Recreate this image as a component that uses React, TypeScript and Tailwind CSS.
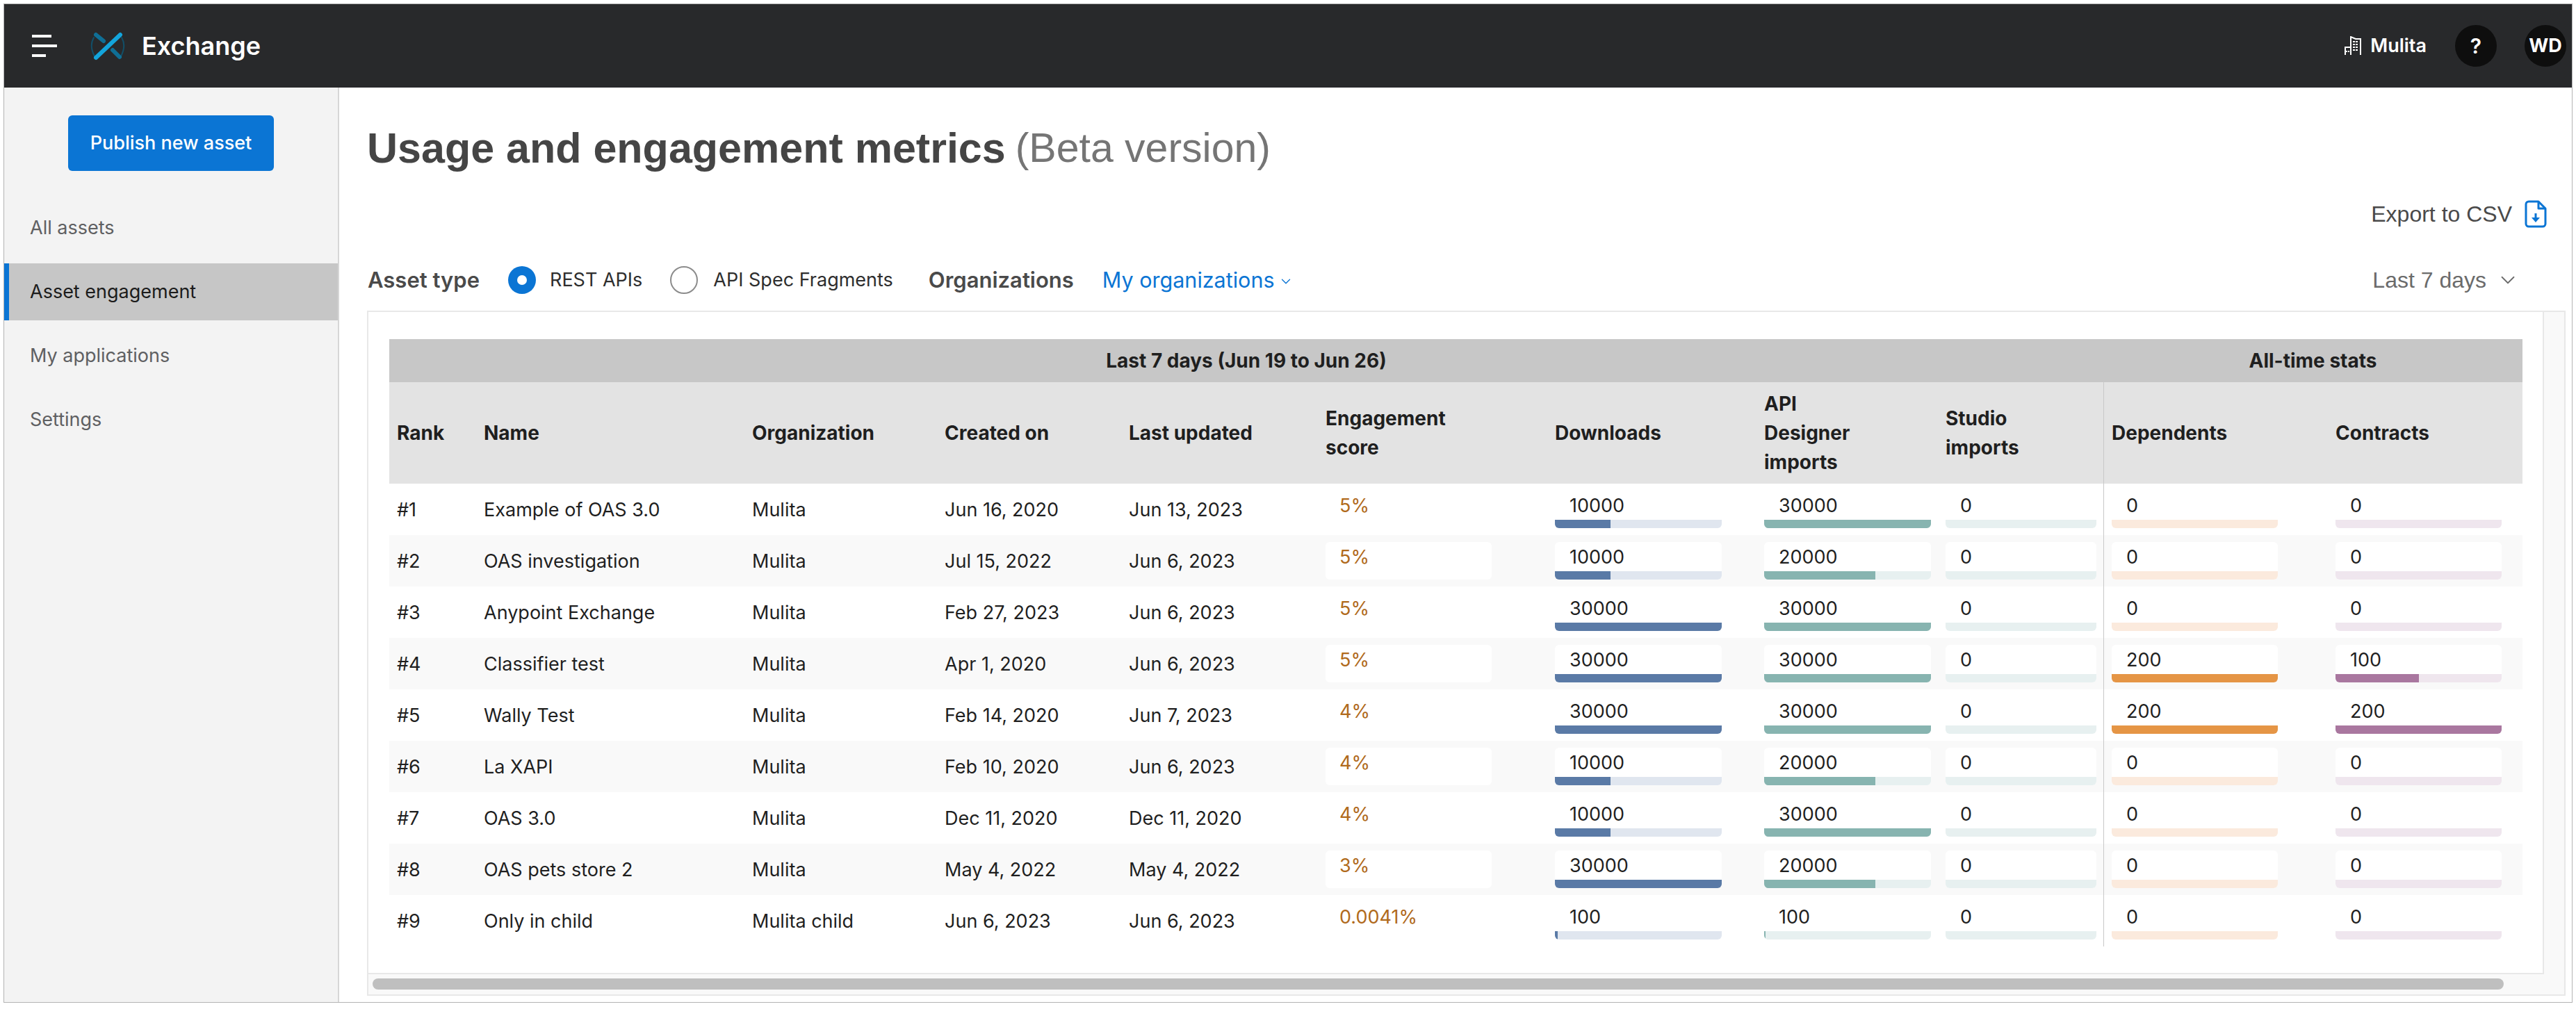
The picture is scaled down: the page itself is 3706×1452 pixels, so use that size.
import { ChevronDown } from "lucide-react";

type Row = {
  rank: string;
  name: string;
  org: string;
  created: string;
  updated: string;
  score: string;
  downloads: [string, number];
  designer: [string, number];
  dependents: [string, number];
  contracts: [string, number];
};

const rows: Row[] = [
  { rank: "#1", name: "Example of OAS 3.0", org: "Mulita", created: "Jun 16, 2020", updated: "Jun 13, 2023", score: "5%", downloads: ["10000", 33.3], designer: ["30000", 100], dependents: ["0", 0], contracts: ["0", 0] },
  { rank: "#2", name: "OAS investigation", org: "Mulita", created: "Jul 15, 2022", updated: "Jun 6, 2023", score: "5%", downloads: ["10000", 33.3], designer: ["20000", 66.6], dependents: ["0", 0], contracts: ["0", 0] },
  { rank: "#3", name: "Anypoint Exchange", org: "Mulita", created: "Feb 27, 2023", updated: "Jun 6, 2023", score: "5%", downloads: ["30000", 100], designer: ["30000", 100], dependents: ["0", 0], contracts: ["0", 0] },
  { rank: "#4", name: "Classifier test", org: "Mulita", created: "Apr 1, 2020", updated: "Jun 6, 2023", score: "5%", downloads: ["30000", 100], designer: ["30000", 100], dependents: ["200", 100], contracts: ["100", 50] },
  { rank: "#5", name: "Wally Test", org: "Mulita", created: "Feb 14, 2020", updated: "Jun 7, 2023", score: "4%", downloads: ["30000", 100], designer: ["30000", 100], dependents: ["200", 100], contracts: ["200", 100] },
  { rank: "#6", name: "La XAPI", org: "Mulita", created: "Feb 10, 2020", updated: "Jun 6, 2023", score: "4%", downloads: ["10000", 33.3], designer: ["20000", 66.6], dependents: ["0", 0], contracts: ["0", 0] },
  { rank: "#7", name: "OAS 3.0", org: "Mulita", created: "Dec 11, 2020", updated: "Dec 11, 2020", score: "4%", downloads: ["10000", 33.3], designer: ["30000", 100], dependents: ["0", 0], contracts: ["0", 0] },
  { rank: "#8", name: "OAS pets store 2", org: "Mulita", created: "May 4, 2022", updated: "May 4, 2022", score: "3%", downloads: ["30000", 100], designer: ["20000", 66.6], dependents: ["0", 0], contracts: ["0", 0] },
  { rank: "#9", name: "Only in child", org: "Mulita child", created: "Jun 6, 2023", updated: "Jun 6, 2023", score: "0.0041%", downloads: ["100", 1.5], designer: ["100", 0.7], dependents: ["0", 0], contracts: ["0", 0] },
];

const gridCols =
  "grid grid-cols-[125px_386px_277px_265px_283px_330px_301px_261px_238px_323px_280px]";

function Metric({
  value,
  pct,
  track,
  fill,
  width,
}: {
  value: string;
  pct: number;
  track: string;
  fill: string;
  width: string;
}) {
  return (
    <div className={`flex h-[54px] flex-col overflow-hidden rounded-[6px] bg-white ${width}`}>
      <div className="flex h-[42px] items-center pl-[21px] pt-[2px]">{value}</div>
      <div className={`h-[12px] ${track}`}>
        <div className={`h-full ${fill}`} style={{ width: `${pct}%` }} />
      </div>
    </div>
  );
}

function TableRow({ row, index }: { row: Row; index: number }) {
  return (
    <div className={`${gridCols} h-[74px] items-center ${index % 2 === 1 ? "bg-[#f9f9f9]" : "bg-white"}`}>
      <div className="pl-[11px] pt-[2px]">{row.rank}</div>
      <div className="pl-[11px] pt-[2px]">{row.name}</div>
      <div className="pl-[11px] pt-[2px]">{row.org}</div>
      <div className="pl-[11px] pt-[2px]">{row.created}</div>
      <div className="pl-[11px] pt-[2px]">{row.updated}</div>
      <div className="pl-[11px]">
        <div className="h-[54px] w-[239px] rounded-[6px] bg-white pl-[20px] leading-[44px] text-[#b06a1c]">
          {row.score}
        </div>
      </div>
      <div className="pl-[11px]">
        <Metric value={row.downloads[0]} pct={row.downloads[1]} track="bg-[#e0e6ef]" fill="bg-[#5a7aa6]" width="w-[240px]" />
      </div>
      <div className="pl-[11px]">
        <Metric value={row.designer[0]} pct={row.designer[1]} track="bg-[#e7f0f0]" fill="bg-[#87b4b0]" width="w-[240px]" />
      </div>
      <div className="pl-[11px]">
        <Metric value="0" pct={0} track="bg-[#e7f0f0]" fill="bg-[#87b4b0]" width="w-[217px]" />
      </div>
      <div className="flex h-full items-center border-l border-[#c9c9c9] pl-[11px]">
        <Metric value={row.dependents[0]} pct={row.dependents[1]} track="bg-[#fbeadd]" fill="bg-[#e59545]" width="w-[239px]" />
      </div>
      <div className="pl-[11px]">
        <Metric value={row.contracts[0]} pct={row.contracts[1]} track="bg-[#efe6ee]" fill="bg-[#a9779f]" width="w-[239px]" />
      </div>
    </div>
  );
}

function Radio({ checked }: { checked?: boolean }) {
  if (checked) {
    return (
      <span className="flex h-[40px] w-[40px] items-center justify-center rounded-full bg-[#0b75d4]">
        <span className="h-[14px] w-[14px] rounded-full bg-white" />
      </span>
    );
  }
  return <span className="block h-[40px] w-[40px] rounded-full border-2 border-[#8c8c8c] bg-white" />;
}

function Logo() {
  return (
    <svg width="52" height="42" viewBox="0 0 52 42" fill="none" strokeLinecap="round">
      <path d="M6 9Q-1 21 7 36" stroke="#124f68" strokeWidth="2" />
      <path d="M46 9Q53 21 45 36" stroke="#124f68" strokeWidth="2" />
      <path d="M9 5L20 14" stroke="#0f6f96" strokeWidth="6" />
      <path d="M33 27L43 37" stroke="#0f6f96" strokeWidth="6" />
      <path d="M9 38L44 5" stroke="#13a5dc" strokeWidth="6" />
    </svg>
  );
}

function Building() {
  return (
    <svg width="24" height="28" viewBox="0 0 24 28" fill="none" stroke="#fff" strokeWidth="2">
      <path d="M9 27V1L16 4H23V27" />
      <path d="M1 27V16H9" />
      <path d="M1 22H7M12 8H20M12 12H20M12 16H20M12 20H20" strokeDasharray="3 1" />
    </svg>
  );
}

function FileDown() {
  return (
    <svg width="32" height="40" viewBox="0 0 32 40" fill="none" stroke="#0b75d4" strokeWidth="3">
      <path d="M6 2H20L30 12V34A4 4 0 0 1 26 38H6A4 4 0 0 1 2 34V6A4 4 0 0 1 6 2Z" strokeLinejoin="round" />
      <path d="M20 2V12H30" strokeLinejoin="round" />
      <path d="M16 19V28" />
      <path d="M10 25H22L16 32Z" fill="#0b75d4" stroke="none" />
    </svg>
  );
}

export default function App() {
  return (
    <div className="h-[1452px] w-[3706px] overflow-hidden bg-white pl-[5px] pt-[5px] font-['Inter',sans-serif]">
      <div className="flex h-[1438px] w-[3696px] flex-col border border-[#b4b4b4]">
        <header className="flex h-[120px] shrink-0 items-center bg-[#28292b] text-white">
          <div className="ml-[40px] flex flex-col gap-[10px]">
            <span className="h-[4px] w-[28px] bg-white" />
            <span className="h-[4px] w-[36px] bg-white" />
            <span className="h-[4px] w-[20px] bg-white" />
          </div>
          <div className="ml-[47px]">
            <Logo />
          </div>
          <span className="ml-[23px] text-[36px] font-semibold">Exchange</span>
          <div className="ml-auto flex items-center">
            <Building />
            <span className="ml-[13px] text-[27px] font-semibold">Mulita</span>
            <span className="ml-[41px] flex h-[60px] w-[60px] items-center justify-center rounded-full bg-[#0e0e0e] text-[30px] font-semibold">
              ?
            </span>
            <span className="ml-[40px] mr-[8px] flex h-[60px] w-[60px] items-center justify-center rounded-full bg-[#0e0e0e] text-[27px] font-bold">
              WD
            </span>
          </div>
        </header>

        <div className="flex min-h-0 flex-1">
          <aside className="w-[482px] shrink-0 border-r-2 border-[#d6d6d6] bg-[#f3f3f3] pt-[40px] text-[27px] text-[#5f6062]">
            <button className="ml-[92px] h-[80px] w-[296px] rounded-[6px] bg-[#0b75d4] text-[27px] font-medium text-white">
              Publish new asset
            </button>
            <nav className="mt-[41px] flex flex-col gap-[10px]">
              <a className="flex h-[82px] items-center pl-[37px]">All assets</a>
              <a className="flex h-[82px] items-center border-l-[7px] border-[#0b75d4] bg-[#c6c6c6] pl-[30px] text-[#1c1c1c]">
                Asset engagement
              </a>
              <a className="flex h-[82px] items-center pl-[37px]">My applications</a>
              <a className="flex h-[82px] items-center pl-[37px]">Settings</a>
            </nav>
          </aside>

          <main className="min-w-0 flex-1 pl-[40px]">
            <h1 className="flex h-[162px] pt-[50px] font-['Liberation_Sans',sans-serif] leading-[74px]">
              <span className="text-[61px] font-bold text-[#454545]">Usage and engagement metrics</span>
              <span className="ml-[14px] text-[59px] text-[#757575]">(Beta version)</span>
            </h1>

            <div className="flex h-[40px] items-center justify-end gap-[18px] pr-[36px] font-['Liberation_Sans',sans-serif] text-[32px] text-[#4a4a4a]">
              <span>Export to CSV</span>
              <FileDown />
            </div>

            <div className="mb-[24px] mt-[55px] flex h-[40px] items-center pl-[1px] pr-[75px]">
              <span className="text-[31px] font-semibold text-[#4a4a4a]">Asset type</span>
              <span className="ml-[41px]">
                <Radio checked />
              </span>
              <span className="ml-[20px] text-[27px] text-[#2e2e2e]">REST APIs</span>
              <span className="ml-[40px]">
                <Radio />
              </span>
              <span className="ml-[22px] text-[27px] text-[#2e2e2e]">API Spec Fragments</span>
              <span className="ml-[51px] text-[31px] font-semibold text-[#4a4a4a]">Organizations</span>
              <span className="ml-[41px] text-[30.5px] text-[#0b75d4]">My organizations</span>
              <ChevronDown className="ml-[5px] mt-[4px] h-[22px] w-[22px] text-[#0b75d4]" strokeWidth={1.5} />
              <span className="ml-auto font-['Liberation_Sans',sans-serif] text-[32px] text-[#6b6b6b]">Last 7 days</span>
              <ChevronDown className="ml-[14px] h-[34px] w-[34px] text-[#6b6b6b]" strokeWidth={1.25} />
            </div>

            <section className="flex h-[986px] w-[3163px] flex-col border-2 border-[#e8e8e8] bg-[#f9f9f9]">
              <div className="flex min-h-0 flex-1">
                <div className="w-[3130px] shrink-0 border-b-2 border-r-2 border-[#e8e8e8] bg-white pl-[30px] pt-[39px] text-[27px] text-[#1f1f1f]">
                  <div className="w-[3069px]">
                    <div className="grid h-[62px] grid-cols-[2466px_603px] items-center bg-[#c7c7c7] text-center text-[28px] font-bold">
                      <div>Last 7 days (Jun 19 to Jun 26)</div>
                      <div>All-time stats</div>
                    </div>
                    <div className={`${gridCols} h-[146px] items-center bg-[#e3e3e3] text-[28px] font-bold leading-[42px]`}>
                      <div className="pl-[11px]">Rank</div>
                      <div className="pl-[11px]">Name</div>
                      <div className="pl-[11px]">Organization</div>
                      <div className="pl-[11px]">Created on</div>
                      <div className="pl-[11px]">Last updated</div>
                      <div className="pl-[11px]">
                        Engagement
                        <br />
                        score
                      </div>
                      <div className="pl-[11px]">Downloads</div>
                      <div className="pl-[11px]">
                        API
                        <br />
                        Designer
                        <br />
                        imports
                      </div>
                      <div className="pl-[11px]">
                        Studio
                        <br />
                        imports
                      </div>
                      <div className="flex h-full items-center border-l border-[#c9c9c9] pl-[11px]">Dependents</div>
                      <div className="pl-[11px]">Contracts</div>
                    </div>
                    {rows.map((row, i) => (
                      <TableRow key={row.rank} row={row} index={i} />
                    ))}
                  </div>
                </div>
              </div>
              <div className="h-[29px] shrink-0 pl-[6px] pt-[6px]">
                <div className="h-[16px] w-[3066px] rounded-[8px] bg-[#bfbfbf]" />
              </div>
            </section>
          </main>
        </div>
      </div>
    </div>
  );
}
